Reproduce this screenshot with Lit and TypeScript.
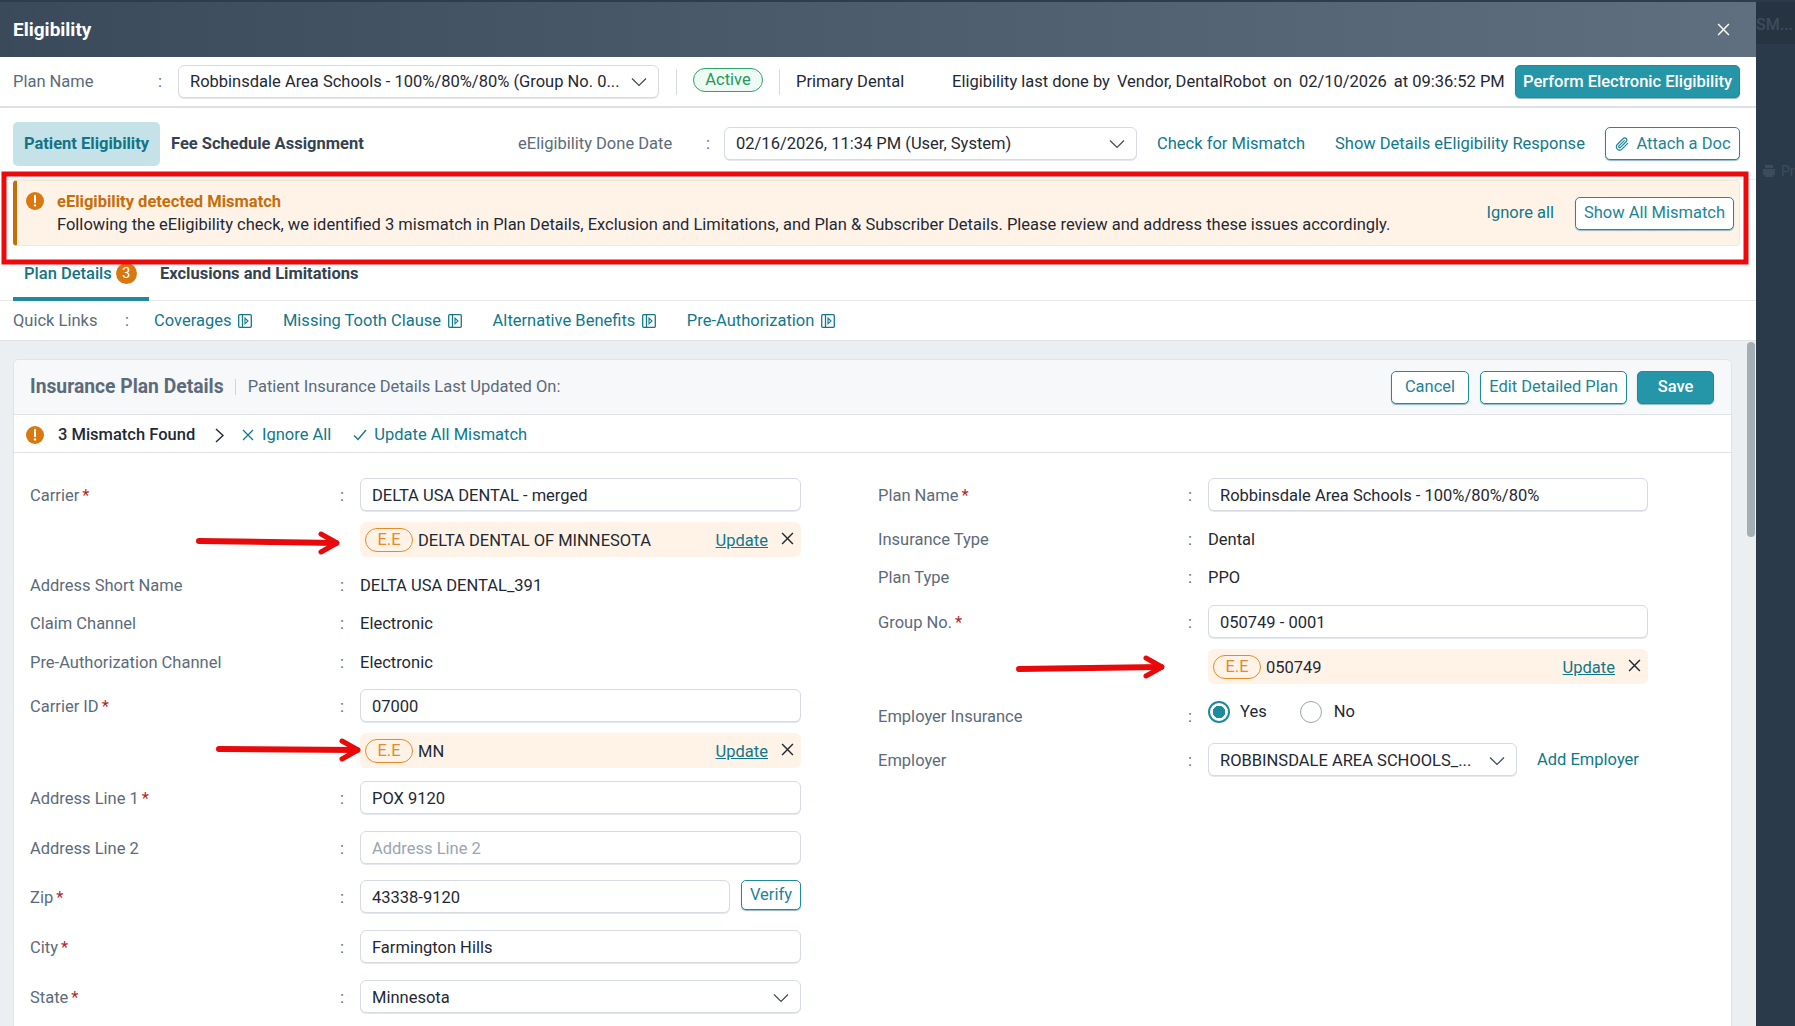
import { LitElement, html, svg, css, nothing } from 'lit';
import { customElement } from 'lit/decorators.js';

const chevron = html`<svg class="chev" viewBox="0 0 16 10"><path d="M1 1.5l7 7 7-7" fill="none" stroke="currentColor" stroke-width="1.2"/></svg>`;
const closeX = html`<svg class="x" viewBox="0 0 12 12"><path d="M1 1l10 10M11 1L1 11" fill="none" stroke="currentColor" stroke-width="1.3"/></svg>`;
const warn = html`<svg class="warn" viewBox="0 0 18 18"><circle cx="9" cy="9" r="9" fill="#d9780f"/><path d="M9 3.8v6.4" stroke="#fff" stroke-width="2" stroke-linecap="round"/><circle cx="9" cy="13.4" r="1.2" fill="#fff"/></svg>`;
const extLink = html`<svg class="ext" viewBox="0 0 14 14"><rect x=".7" y=".7" width="12.6" height="12.6" rx="1" fill="none" stroke="currentColor" stroke-width="1.3"/><path d="M4.5 1v12" stroke="currentColor" stroke-width="1.3"/><path d="M7 4.2L10 7 7 9.8z" fill="none" stroke="currentColor" stroke-width="1.1"/></svg>`;
const clip = html`<svg class="clip" viewBox="0 0 16 16"><path d="M13.6 7.4l-5.7 5.7a3.2 3.2 0 0 1-4.6-4.6l6-6a2.1 2.1 0 0 1 3 3l-5.8 5.8a1 1 0 0 1-1.5-1.5l5.3-5.2" fill="none" stroke="currentColor" stroke-width="1.2" stroke-linecap="round"/></svg>`;

type Field = {
  label: string;
  req?: boolean;
  kind: 'input' | 'ee' | 'text' | 'select' | 'zip' | 'radio' | 'employer' | 'placeholder';
  value?: string;
  gap: number;
};

const leftFields: Field[] = [
  { label: 'Carrier', req: true, kind: 'input', value: 'DELTA USA DENTAL - merged', gap: 0 },
  { label: '', kind: 'ee', value: 'DELTA DENTAL OF MINNESOTA', gap: 11 },
  { label: 'Address Short Name', kind: 'text', value: 'DELTA USA DENTAL_391', gap: 16 },
  { label: 'Claim Channel', kind: 'text', value: 'Electronic', gap: 14 },
  { label: 'Pre-Authorization Channel', kind: 'text', value: 'Electronic', gap: 15 },
  { label: 'Carrier ID', req: true, kind: 'input', value: '07000', gap: 15 },
  { label: '', kind: 'ee', value: 'MN', gap: 11 },
  { label: 'Address Line 1', req: true, kind: 'input', value: 'POX 9120', gap: 13 },
  { label: 'Address Line 2', kind: 'placeholder', value: 'Address Line 2', gap: 17 },
  { label: 'Zip', req: true, kind: 'zip', value: '43338-9120', gap: 16 },
  { label: 'City', req: true, kind: 'input', value: 'Farmington Hills', gap: 17 },
  { label: 'State', req: true, kind: 'select', value: 'Minnesota', gap: 17 },
];

const rightFields: Field[] = [
  { label: 'Plan Name', req: true, kind: 'input', value: 'Robbinsdale Area Schools - 100%/80%/80%', gap: 0 },
  { label: 'Insurance Type', kind: 'text', value: 'Dental', gap: 16 },
  { label: 'Plan Type', kind: 'text', value: 'PPO', gap: 14 },
  { label: 'Group No.', req: true, kind: 'input', value: '050749 - 0001', gap: 16 },
  { label: '', kind: 'ee', value: '050749', gap: 11 },
  { label: 'Employer Insurance', kind: 'radio', gap: 17 },
  { label: 'Employer', kind: 'employer', value: 'ROBBINSDALE AREA SCHOOLS_...', gap: 12 },
];

const quickLinks = ['Coverages', 'Missing Tooth Clause', 'Alternative Benefits', 'Pre-Authorization'];

// the red annotation arrows drawn on top of the screenshot
const arrows = [
  { x1: 199, y1: 541, x2: 339, y2: 543 },
  { x1: 219, y1: 749, x2: 360, y2: 750 },
  { x1: 1019, y1: 669, x2: 1164, y2: 667 },
];

@customElement('app-root')
export class AppRoot extends LitElement {
  static styles = css`
    :host {
      display: block;
      position: relative;
      width: 1795px;
      height: 1026px;
      overflow: hidden;
      background: #2b3a4a;
      font: 16.5px/24px Roboto, 'Noto Sans', sans-serif;
      color: #1f2933;
    }
    .page { display: flex; height: 100%; }
    .modal { width: 1756px; height: 100%; background: #fff; display: flex; flex-direction: column; flex: none; }
    .aside { flex: 1; min-width: 0; color: #3d4c5b; white-space: nowrap; }
    .aside-top { height: 42px; margin-top: 2px; background: #263442; font-weight: 500; line-height: 46px; font-size: 16px; }
    .aside-print { display: flex; gap: 5px; align-items: center; margin: 115px 0 0 6px; font-size: 14px; }
    .aside-print svg { width: 14px; height: 14px; }

    .head {
      height: 57px; flex: none; box-sizing: border-box;
      border-top: 2px solid #2f3c4a;
      background: linear-gradient(90deg, #3a4a5b, #606f7f);
      display: flex; align-items: center; justify-content: space-between;
      padding: 0 26px 0 13px; color: #fff;
      font-size: 19px; font-weight: 700;
    }
    .head .x { width: 13px; height: 13px; }

    .row1 { height: 51px; flex: none; box-sizing: border-box; border-bottom: 2px solid #dde1e6; display: flex; align-items: center; padding: 0 16px 0 13px; }
    .lbl { color: #5c6b7a; }
    .plan-lbl { width: 145px; }
    .colon { color: #5c6b7a; width: 20px; flex: none; }
    .box {
      box-sizing: border-box; height: 33px; border: 1px solid #d6dbe4; border-radius: 6px; background: #fff;
      display: flex; align-items: center; justify-content: space-between; padding: 0 11px; white-space: nowrap;
      box-shadow: 0 1px 0 #e4e7ec;
    }
    .chev { width: 16px; height: 10px; color: #3c4a58; flex: none; }
    .plan-sel { width: 481px; }
    .sep { width: 1px; height: 26px; background: #d5dae0; }
    .active { box-sizing: border-box; width: 70px; height: 24px; margin: -4px 16px 0; border: 1px solid #2ea56a; border-radius: 12px; background: #eefaf3; color: #1f9a5c; line-height: 22px; text-align: center; }
    .sep-a { margin-left: 17px; }
    .ptype { margin-left: 16px; width: 156px; white-space: nowrap; }
    .last { white-space: nowrap; display: flex; gap: 7px; }
    .btn {
      box-sizing: border-box; height: 33px; border: 1px solid #1f8a9c; border-radius: 5px; color: #1d8496; background: #fff;
      display: flex; align-items: center; justify-content: center; white-space: nowrap; box-shadow: 0 1px 1px #8fb9c2;
    }
    .btn.solid { background: #2595a8; color: #fff; font-weight: 500; }
    .perform { width: 225px; margin-left: auto; }

    .row2 { height: 72px; flex: none; box-sizing: border-box; border-bottom: 1px solid #eceff2; display: flex; align-items: center; padding: 0 16px 0 13px; }
    .tab-on { width: 147px; height: 44px; background: #c4e2e8; border-radius: 5px; color: #147486; font-weight: 700; display: flex; align-items: center; justify-content: center; }
    .tab-off { margin-left: 11px; width: 347px; font-weight: 700; color: #36434f; white-space: nowrap; }
    .done-lbl { width: 188px; white-space: nowrap; }
    .colon.done { width: 18px; }
    .date-sel { width: 413px; }
    .link { color: #11788a; white-space: nowrap; }
    .check { margin-left: 20px; width: 178px; }
    .attach { margin-left: auto; width: 135px; gap: 6px; }
    .clip { width: 16px; height: 16px; }

    .alert-wrap { flex: none; padding: 0 16px 0 13px; }
    .alert {
      box-sizing: border-box; height: 66px; background: #fff3e8; border: 1px solid #f8e6d5; border-left: 4px solid #c66e0a; border-radius: 4px;
      display: flex; align-items: center; padding: 0 5px 0 9px;
    }
    .warn { width: 18px; height: 18px; flex: none; }
    .alert .warn { align-self: flex-start; margin-top: 11px; }
    .alert-text { margin-left: 13px; flex: 1; white-space: nowrap; }
    .alert-title { color: #c66e0a; font-weight: 700; line-height: 22px; margin-top: 1px; }
    .alert-ignore { margin-right: 21px; }
    .alert-btn { width: 159px; }

    .tabs { height: 55px; flex: none; box-sizing: border-box; border-bottom: 1px solid #e6e9ed; display: flex; padding-left: 13px; }
    .tab { width: 136px; box-sizing: border-box; border-bottom: 4px solid #1f8a9c; padding: 16px 0 0 11px; color: #147486; font-weight: 500; display: flex; height: 55px; gap: 4px; white-space: nowrap; }
    .badge { width: 21px; height: 21px; margin-top: 1px; border-radius: 50%; background: #d9780f; color: #fff; font-size: 15px; line-height: 21px; text-align: center; font-weight: 400; }
    .tab2 { margin: 16px 0 0 11px; color: #36434f; font-weight: 700; }

    .quick { height: 40px; flex: none; box-sizing: border-box; border-bottom: 1px solid #dfe3e8; display: flex; align-items: center; padding-left: 13px; }
    .quick-lbl { width: 112px; }
    .colon.q { width: 29px; }
    .qlink { display: flex; align-items: center; gap: 7px; margin-right: 30.5px; color: #11788a; }
    .ext { width: 14px; height: 14px; color: #11788a; }

    .main { flex: 1; min-height: 0; background: #ebeff2; padding: 18px 24px 0 13px; overflow: hidden; }
    .card { background: #fff; border: 1px solid #dfe3e8; border-radius: 6px; height: 800px; }
    .card-head { height: 55px; box-sizing: border-box; border-bottom: 1px solid #dfe3e8; background: #f6f8fa; border-radius: 6px 6px 0 0; display: flex; align-items: center; padding: 0 17px 0 16px; }
    .card-title { font-size: 19.3px; font-weight: 700; color: #5c6b7a; margin-top: -1px; }
    .card-sep { width: 1px; height: 16px; background: #cfd5db; margin: 0 12px 0 11px; }
    .card-sub { color: #5c6b7a; flex: 1; }
    .cancel { width: 78px; }
    .edit { width: 147px; margin: 0 10px 0 11px; }
    .save { width: 77px; }

    .toolbar { height: 38px; box-sizing: border-box; border-bottom: 1px solid #dfe3e8; display: flex; align-items: center; padding: 3px 0 0 12px; color: #11788a; }
    .found { margin-left: 14px; width: 157px; font-weight: 500; color: #1f2933; white-space: nowrap; }
    .tool-chev { width: 9px; height: 15px; color: #1f2933; margin-right: 18px; }
    .tool-x { width: 12px; height: 12px; margin-right: 8px; }
    .tool-check { width: 14px; height: 12px; margin: 0 7px 0 22px; }

    .body { display: flex; padding: 25px 0 0 16px; gap: 77px; }
    .col { flex: none; width: 771px; display: flex; flex-direction: column; }
    .col.right { width: 770px; }
    .field { display: grid; grid-template-columns: 311px 19px 1fr; align-items: center; }
    .field .lbl, .field .colon, .field .val { margin-top: 1px; margin-bottom: -1px; }
    .field .box { padding-top: 2px; }
    .field .colon { margin-left: -1px; }
    .req { color: #b3261e; margin-left: 3px; }
    .ph { color: #9aa5b1; }
    .zip-wrap { display: flex; justify-content: space-between; }
    .zip-box { width: 370px; }
    .verify { width: 60px; height: 30px; }
    .ee { box-sizing: border-box; height: 35px; background: #fff3e8; border-radius: 6px; display: flex; align-items: center; padding: 1px 7px 0 5px; white-space: nowrap; }
    .pill { box-sizing: border-box; width: 48px; height: 24px; border: 1px solid #e58a2a; border-radius: 12px; color: #e58a2a; line-height: 22px; text-align: center; margin-right: 5px; }
    .ee-val { flex: 1; padding-top: 1px; }
    .ee a { color: #11788a; text-decoration: underline; margin-right: 13px; padding-top: 1px; }
    .ee .x { width: 13px; height: 13px; margin-top: -3px; }
    .radios { display: flex; align-items: flex-start; height: 30px; line-height: 22px; }
    .radio { box-sizing: border-box; width: 22px; height: 22px; border-radius: 50%; border: 1px solid #9aa5b1; margin-right: 10px; }
    .radio.on { border: 2px solid #1f8a9c; background: radial-gradient(circle, #1f8a9c 0 6px, #fff 6.5px); }
    .radio-yes { margin-right: 33px; }
    .radio-no { margin-left: 2px; }
    .emp { display: flex; align-items: center; }
    .emp-box { width: 309px; }
    .emp a { margin-left: 20px; }

    .annot { position: absolute; inset: 0; width: 1795px; height: 1026px; pointer-events: none; }
    .scroll { position: absolute; left: 1747px; top: 342px; width: 8px; height: 195px; background: #a5adb5; border-radius: 4px; }
  `;

  private renderControl(f: Field) {
    switch (f.kind) {
      case 'input':
        return html`<div class="box">${f.value}</div>`;
      case 'placeholder':
        return html`<div class="box ph">${f.value}</div>`;
      case 'select':
        return html`<div class="box">${f.value}${chevron}</div>`;
      case 'text':
        return html`<div class="val">${f.value}</div>`;
      case 'zip':
        return html`<div class="zip-wrap"><div class="box zip-box">${f.value}</div><div class="btn verify">Verify</div></div>`;
      case 'ee':
        return html`<div class="ee"><span class="pill">E.E</span><span class="ee-val">${f.value}</span><a>Update</a>${closeX}</div>`;
      case 'radio':
        return html`<div class="radios">
          <span class="radio on"></span><span class="radio-yes">Yes</span>
          <span class="radio"></span><span class="radio-no">No</span>
        </div>`;
      case 'employer':
        return html`<div class="emp"><div class="box emp-box">${f.value}${chevron}</div><a class="link">Add Employer</a></div>`;
    }
  }

  private renderField(f: Field) {
    return html`<div class="field" style="margin-top:${f.gap}px">
      <div class="lbl">${f.label}${f.req ? html`<span class="req">*</span>` : nothing}</div>
      <div class="colon">${f.label ? ':' : ''}</div>
      ${this.renderControl(f)}
    </div>`;
  }

  private renderArrow(a: { x1: number; y1: number; x2: number; y2: number }) {
    return svg`<path d="M${a.x1} ${a.y1}L${a.x2 - 3} ${a.y2}" stroke="#e80a0a" stroke-width="6" stroke-linecap="round" fill="none"/>
      <path d="M${a.x2 - 18} ${a.y2 - 9}L${a.x2 - 2} ${a.y2}L${a.x2 - 18} ${a.y2 + 9}" stroke="#e80a0a" stroke-width="5" stroke-linecap="round" stroke-linejoin="round" fill="none"/>`;
  }

  render() {
    return html`
      <div class="page">
        <div class="modal">
          <div class="head"><span>Eligibility</span>${closeX}</div>

          <div class="row1">
            <span class="lbl plan-lbl">Plan Name</span>
            <span class="colon">:</span>
            <div class="box plan-sel">Robbinsdale Area Schools - 100%/80%/80% (Group No. 0...${chevron}</div>
            <span class="sep sep-a"></span>
            <span class="active">Active</span>
            <span class="sep"></span>
            <span class="ptype">Primary Dental</span>
            <span class="last"><span>Eligibility last done by</span><span>Vendor, DentalRobot</span><span>on</span><span>02/10/2026</span><span>at 09:36:52 PM</span></span>
            <div class="btn solid perform">Perform Electronic Eligibility</div>
          </div>

          <div class="row2">
            <div class="tab-on">Patient Eligibility</div>
            <div class="tab-off">Fee Schedule Assignment</div>
            <span class="lbl done-lbl">eEligibility Done Date</span>
            <span class="colon done">:</span>
            <div class="box date-sel">02/16/2026, 11:34 PM (User, System)${chevron}</div>
            <span class="link check">Check for Mismatch</span>
            <span class="link">Show Details eEligibility Response</span>
            <div class="btn attach">${clip}Attach a Doc</div>
          </div>

          <div class="alert-wrap">
            <div class="alert">
              ${warn}
              <div class="alert-text">
                <div class="alert-title">eEligibility detected Mismatch</div>
                <div>Following the eEligibility check, we identified 3 mismatch in Plan Details, Exclusion and Limitations, and Plan &amp; Subscriber Details. Please review and address these issues accordingly.</div>
              </div>
              <span class="link alert-ignore">Ignore all</span>
              <div class="btn alert-btn">Show All Mismatch</div>
            </div>
          </div>

          <div class="tabs">
            <div class="tab">Plan Details<span class="badge">3</span></div>
            <div class="tab2">Exclusions and Limitations</div>
          </div>

          <div class="quick">
            <span class="lbl quick-lbl">Quick Links</span>
            <span class="colon q">:</span>
            ${quickLinks.map((q) => html`<span class="qlink">${q}${extLink}</span>`)}
          </div>

          <div class="main">
            <div class="card">
              <div class="card-head">
                <span class="card-title">Insurance Plan Details</span>
                <span class="card-sep"></span>
                <span class="card-sub">Patient Insurance Details Last Updated On:</span>
                <div class="btn cancel">Cancel</div>
                <div class="btn edit">Edit Detailed Plan</div>
                <div class="btn solid save">Save</div>
              </div>
              <div class="toolbar">
                ${warn}
                <span class="found">3 Mismatch Found</span>
                <svg class="tool-chev" viewBox="0 0 9 15"><path d="M1 1l7 6.5L1 14" fill="none" stroke="currentColor" stroke-width="1.4"/></svg>
                <svg class="tool-x" viewBox="0 0 12 12"><path d="M1 1l10 10M11 1L1 11" fill="none" stroke="currentColor" stroke-width="1.3"/></svg>
                <span>Ignore All</span>
                <svg class="tool-check" viewBox="0 0 14 12"><path d="M1 6.5L5 10.5 13 1" fill="none" stroke="currentColor" stroke-width="1.4"/></svg>
                <span>Update All Mismatch</span>
              </div>
              <div class="body">
                <div class="col">${leftFields.map((f) => this.renderField(f))}</div>
                <div class="col right">${rightFields.map((f) => this.renderField(f))}</div>
              </div>
            </div>
          </div>
        </div>

        <div class="aside">
          <div class="aside-top">SM...</div>
          <div class="aside-print">
            <svg viewBox="0 0 14 14"><path d="M3 1h8v3H3zM1 5h12v6h-2v2H3v-2H1z" fill="currentColor"/></svg>
            <span>Pr</span>
          </div>
        </div>
      </div>

      <div class="scroll"></div>
      <svg class="annot" viewBox="0 0 1795 1026">
        <rect x="4" y="174" width="1742" height="88" fill="none" stroke="#ee0a0a" stroke-width="5"/>
        ${arrows.map((a) => this.renderArrow(a))}
      </svg>
    `;
  }
}
